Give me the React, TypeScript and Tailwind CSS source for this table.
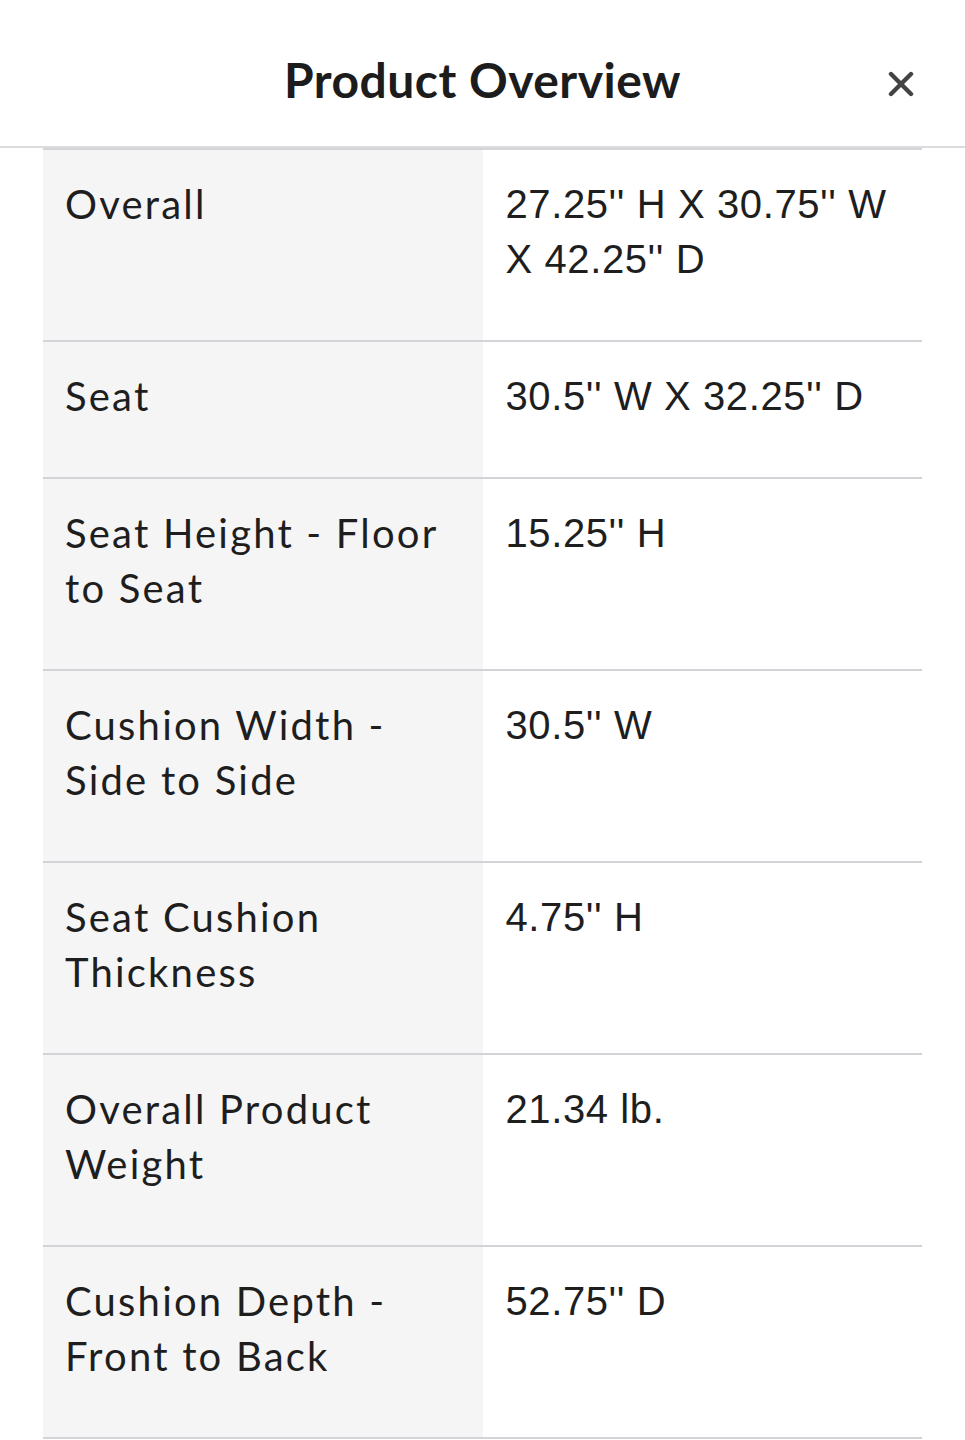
import React from "react";

const rows: { label: string[]; value: string[] }[] = [
  { label: ["Overall"], value: ["27.25'' H X 30.75'' W", "X 42.25'' D"] },
  { label: ["Seat"], value: ["30.5'' W X 32.25'' D"] },
  { label: ["Seat Height - Floor", "to Seat"], value: ["15.25'' H"] },
  { label: ["Cushion Width -", "Side to Side"], value: ["30.5'' W"] },
  { label: ["Seat Cushion", "Thickness"], value: ["4.75'' H"] },
  { label: ["Overall Product", "Weight"], value: ["21.34 lb."] },
  { label: ["Cushion Depth -", "Front to Back"], value: ["52.75'' D"] },
];

export default function App() {
  return (
    <div className="min-h-[1440px] w-full bg-white">
      <header className="relative flex h-[148px] items-center justify-center border-b-2 border-[#dcdcdf] pt-[14px]">
        <h1
          className="text-[48px] font-bold leading-none tracking-[0.01em] text-[#1c1c1c]"
          style={{ fontFamily: "Lato, 'Noto Sans', sans-serif" }}
        >
          Product Overview
        </h1>
        <button
          aria-label="Close"
          className="absolute right-[51px] top-[71px] flex h-[26px] w-[26px] items-center justify-center"
        >
          <svg width="26" height="26" viewBox="0 0 26 26" fill="none">
            <path
              d="M3 3L23 23M23 3L3 23"
              stroke="#444444"
              strokeWidth="4.4"
              strokeLinecap="round"
            />
          </svg>
        </button>
      </header>
      <div className="mx-[43px] border-t-2 border-[#d4d4d8]">
        {rows.map((r, i) => (
          <div key={i} className="grid grid-cols-2 border-b-2 border-[#d4d4d8]">
            <div
              className="bg-[#f5f5f5] pl-[22px] pr-[20px] pt-[27px] pb-[53px] text-[40px] leading-[55px] tracking-[0.055em] text-[#1e1e1e]"
              style={{ fontFamily: "Lato, 'Noto Sans', sans-serif" }}
            >
              {r.label.map((l, j) => (
                <div key={j} className="whitespace-nowrap">
                  {l}
                </div>
              ))}
            </div>
            <div
              className="bg-white pl-[23px] pr-[20px] pt-[27px] pb-[53px] text-[40px] leading-[55px] tracking-[0.015em] text-[#1e1e1e]"
              style={{ fontFamily: "'Liberation Sans', Arial, sans-serif" }}
            >
              {r.value.map((l, j) => (
                <div key={j} className="whitespace-nowrap">
                  {l}
                </div>
              ))}
            </div>
          </div>
        ))}
      </div>
    </div>
  );
}
